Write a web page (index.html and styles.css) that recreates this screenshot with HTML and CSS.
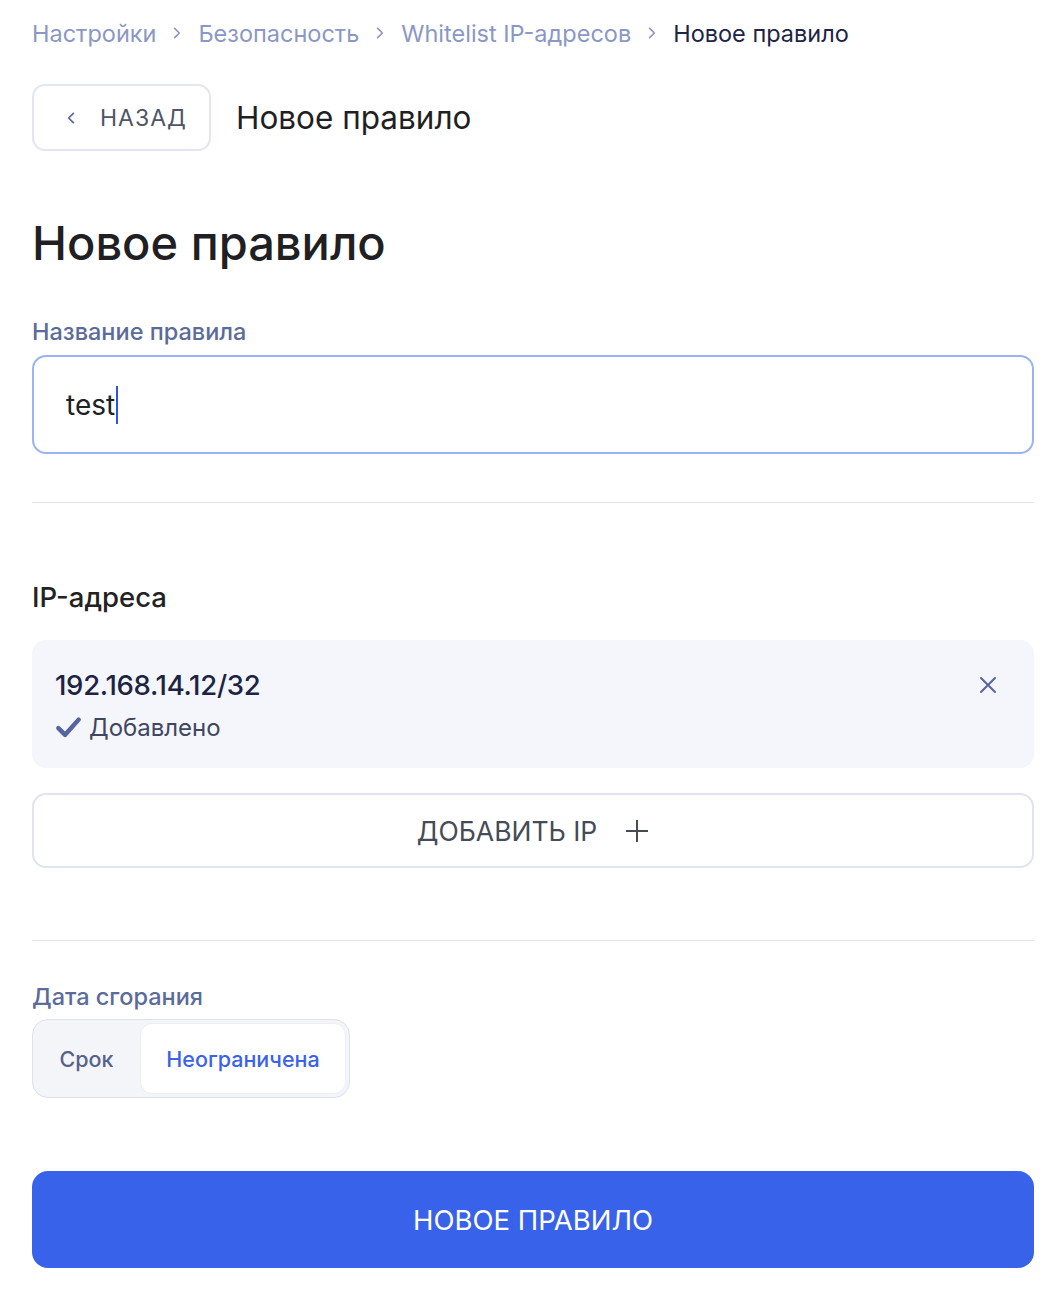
FILE: index.html
```html
<!DOCTYPE html>
<html lang="ru">
<head>
<meta charset="utf-8">
<title>Новое правило</title>
<link rel="stylesheet" href="styles.css">
</head>
<body>
<div class="page">
  <nav class="crumbs">
    <a class="crumb">Настройки</a>
    <svg class="sep" viewBox="0 0 12 12"><path d="M4 2l4 4-4 4" fill="none" stroke="currentColor" stroke-width="1.4" stroke-linecap="round" stroke-linejoin="round"/></svg>
    <a class="crumb">Безопасность</a>
    <svg class="sep" viewBox="0 0 12 12"><path d="M4 2l4 4-4 4" fill="none" stroke="currentColor" stroke-width="1.4" stroke-linecap="round" stroke-linejoin="round"/></svg>
    <a class="crumb">Whitelist IP-адресов</a>
    <svg class="sep" viewBox="0 0 12 12"><path d="M4 2l4 4-4 4" fill="none" stroke="currentColor" stroke-width="1.4" stroke-linecap="round" stroke-linejoin="round"/></svg>
    <span class="crumb current">Новое правило</span>
  </nav>

  <div class="topbar">
    <button class="back">
      <svg class="back-ico" viewBox="0 0 12 12"><path d="M8 2L4 6l4 4" fill="none" stroke="currentColor" stroke-width="1.5" stroke-linecap="round" stroke-linejoin="round"/></svg>
      <span>НАЗАД</span>
    </button>
    <div class="top-title">Новое правило</div>
  </div>

  <h1 class="h1">Новое правило</h1>

  <label class="label">Название правила</label>
  <div class="input"><span>test</span><span class="caret"></span></div>

  <hr class="divider first">

  <h2 class="section">IP-адреса</h2>
  <div class="ip-card">
    <div class="ip-info">
      <div class="ip">192.168.14.12/32</div>
      <div class="status">
        <svg class="check" viewBox="0 0 24 24"><path d="M3 12.5l6 6L21 5" fill="none" stroke="currentColor" stroke-width="4" stroke-linecap="round" stroke-linejoin="round"/></svg>
        <span>Добавлено</span>
      </div>
    </div>
    <svg class="close" viewBox="0 0 20 20"><path d="M3 3l14 14M17 3L3 17" fill="none" stroke="currentColor" stroke-width="2" stroke-linecap="round"/></svg>
  </div>
  <button class="add">
    <span>ДОБАВИТЬ IP</span>
    <svg class="plus" viewBox="0 0 24 24"><path d="M12 1v22M1 12h22" fill="none" stroke="currentColor" stroke-width="2"/></svg>
  </button>

  <hr class="divider second">

  <label class="label label-date">Дата сгорания</label>
  <div class="segment">
    <div class="seg">Срок</div>
    <div class="seg active">Неограничена</div>
  </div>

  <button class="primary">НОВОЕ ПРАВИЛО</button>
</div>
</body>
</html>
```
FILE: styles.css
```css
* { box-sizing: border-box; }
body {
  margin: 0;
  background: #fff;
  font-family: Inter, "Noto Sans", sans-serif;
  color: #1f1f24;
}
.page {
  padding: 14px 30px 0 32px;
  display: flex;
  flex-direction: column;
}
.crumbs {
  display: flex;
  align-items: center;
  gap: 14px;
  height: 38px;
  font-size: 23.5px;
  color: #8b97c4;
}
.crumb { color: #8b97c4; }
.crumb.current { color: #1d2545; }
.sep { width: 14px; height: 14px; color: #8b97c4; }

.topbar {
  display: flex;
  align-items: center;
  gap: 25px;
  margin-top: 32px;
}
.back {
  display: flex;
  align-items: center;
  gap: 22px;
  height: 67px;
  width: 179px;
  padding: 0 0 0 30px;
  background: #fff;
  border: 2px solid #e2e6f1;
  border-radius: 13px;
  font-family: inherit;
  font-size: 23px;
  letter-spacing: 1px;
  color: #4e5565;
}
.back-ico { width: 14px; height: 14px; color: #5a66a0; }
.top-title { font-size: 31.5px; color: #1f1f24; }

.h1 {
  margin: 64px 0 0;
  font-size: 47px;
  font-weight: 500;
  line-height: 56px;
  letter-spacing: 0;
  color: #1f1f24;
}
.label {
  margin-top: 46px;
  font-size: 23.5px;
  line-height: 30px;
  color: #5b6b9a;
  font-weight: 500;
}
.label-date { margin-top: 41px; }
.input {
  margin-top: 8px;
  height: 99px;
  border: 2px solid #9ab4f3;
  border-radius: 14px;
  display: flex;
  align-items: center;
  padding-left: 32px;
  font-size: 28px;
  color: #202124;
}
.caret {
  display: inline-block;
  width: 2px;
  height: 38px;
  background: #2a55e6;
  margin-left: 1px;
}
.divider {
  border: 0;
  border-top: 1px solid #e3e4e8;
  margin: 0;
}
.divider.first { margin-top: 48px; }
.section {
  margin: 76px 0 0;
  font-size: 27.5px;
  font-weight: 500;
  line-height: 36px;
  color: #222;
}
.ip-card {
  margin-top: 25px;
  height: 128px;
  background: #f4f6fb;
  border-radius: 14px;
  display: flex;
  align-items: flex-start;
  justify-content: space-between;
  padding: 27px 36px 0 23px;
}
.ip {
  font-size: 27.5px;
  font-weight: 500;
  line-height: 36px;
  color: #1c2444;
  letter-spacing: -0.3px;
}
.status {
  display: flex;
  align-items: center;
  gap: 7px;
  margin-top: 10px;
  font-size: 24px;
  color: #3f4662;
}
.check { width: 27px; height: 27px; color: #5664a0; }
.close { width: 20px; height: 20px; color: #5664a0; margin-top: 8px; }
.add {
  margin-top: 25px;
  height: 75px;
  background: #fff;
  border: 2px solid #e0e4ef;
  border-radius: 14px;
  display: flex;
  align-items: center;
  justify-content: center;
  gap: 28px;
  font-family: inherit;
  font-size: 26.5px;
  color: #454c58;
  padding: 0;
}
.plus { width: 24px; height: 24px; color: #454c58; }
.divider.second { margin-top: 72px; }
.segment {
  margin-top: 7px;
  align-self: flex-start;
  display: flex;
  align-items: center;
  width: 318px;
  height: 79px;
  padding: 3px 3px 3px 0;
  background: #f4f5f9;
  border: 1px solid #dde1ec;
  border-radius: 16px;
}
.seg {
  font-size: 21.5px;
  font-weight: 500;
  color: #56628c;
  display: flex;
  align-items: center;
  justify-content: center;
  height: 100%;
}
.seg:first-child { width: 107px; padding-left: 0; }
.seg.active {
  flex: 1;
  background: #fff;
  border-radius: 12px;
  border: 1px solid #eceef4;
  color: #3a62ea;
}
.primary {
  margin-top: 73px;
  height: 97px;
  background: #3962eb;
  border: 0;
  border-radius: 16px;
  font-family: inherit;
  font-size: 27.5px;
  color: #fff;
}
```
